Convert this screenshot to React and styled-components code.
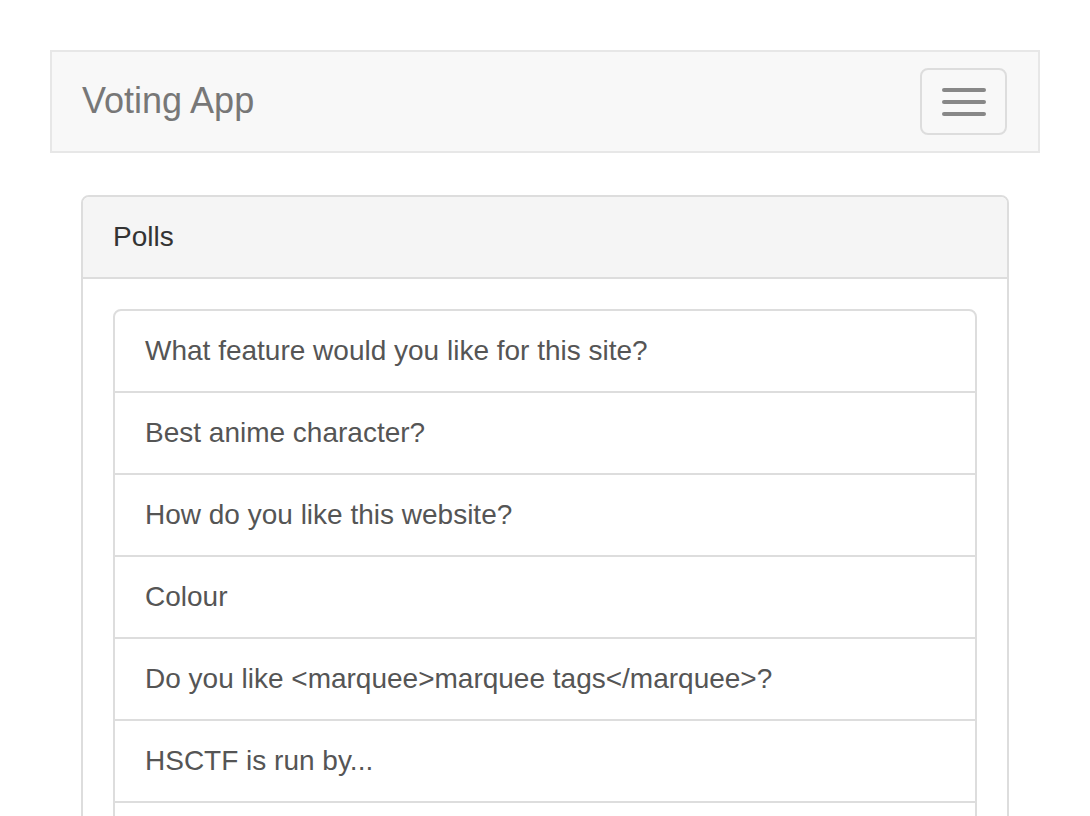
import React from "react";
import styled, { createGlobalStyle } from "styled-components";

const polls = [
  "What feature would you like for this site?",
  "Best anime character?",
  "How do you like this website?",
  "Colour",
  "Do you like <marquee>marquee tags</marquee>?",
  "HSCTF is run by...",
  "Favorite programming language?",
  "Pineapple on pizza?",
];

const App = () => {
  return (
    <>
      <GlobalStyle />
      <Page>
        <Navbar>
          <Brand href="#">Voting App</Brand>
          <Toggle type="button" aria-label="Toggle navigation">
            <IconBar />
            <IconBar />
            <IconBar />
          </Toggle>
        </Navbar>
        <Content>
          <Panel>
            <PanelHeading>Polls</PanelHeading>
            <PanelBody>
              <ListGroup>
                {polls.map((poll) => (
                  <ListItem key={poll} href="#">
                    {poll}
                  </ListItem>
                ))}
              </ListGroup>
            </PanelBody>
          </Panel>
        </Content>
      </Page>
    </>
  );
};

const GlobalStyle = createGlobalStyle`
  html, body {
    margin: 0;
    padding: 0;
    overflow: hidden;
    background: #fff;
  }
  body {
    font-family: "Liberation Sans", Arial, sans-serif;
    color: #333;
  }
  * {
    box-sizing: border-box;
  }
`;

const Page = styled.div`
  padding: 50px 50px 0;
`;

const Navbar = styled.nav`
  display: flex;
  align-items: flex-start;
  justify-content: space-between;
  min-height: 103px;
  background: #f8f8f8;
  border: 2px solid #e7e7e7;
  padding: 0 31px 0 30px;
`;

const Brand = styled.a`
  display: block;
  padding: 29px 0 30px;
  font-size: 36px;
  line-height: 40px;
  color: #777;
  text-decoration: none;
`;

const Toggle = styled.button`
  display: flex;
  flex-direction: column;
  align-items: center;
  gap: 8px;
  width: 87px;
  height: 67px;
  margin-top: 16px;
  padding: 0;
  justify-content: center;
  background: transparent;
  border: 2px solid #ddd;
  border-radius: 8px;
`;

const IconBar = styled.span`
  display: block;
  width: 44px;
  height: 4px;
  border-radius: 2px;
  background: #888;
`;

const Content = styled.div`
  padding: 42px 31px 0;
`;

const Panel = styled.div`
  background: #fff;
  border: 2px solid #ddd;
  border-radius: 8px;
`;

const PanelHeading = styled.div`
  padding: 20px 30px;
  font-size: 28px;
  line-height: 40px;
  color: #333;
  background: #f5f5f5;
  border-bottom: 2px solid #ddd;
  border-radius: 6px 6px 0 0;
`;

const PanelBody = styled.div`
  padding: 30px;
`;

const ListGroup = styled.div`
  display: flex;
  flex-direction: column;
`;

const ListItem = styled.a`
  display: block;
  padding: 20px 30px;
  margin-bottom: -2px;
  font-size: 28px;
  line-height: 40px;
  color: #555;
  text-decoration: none;
  background: #fff;
  border: 2px solid #ddd;

  &:first-child {
    border-radius: 8px 8px 0 0;
  }
`;

export default App;
